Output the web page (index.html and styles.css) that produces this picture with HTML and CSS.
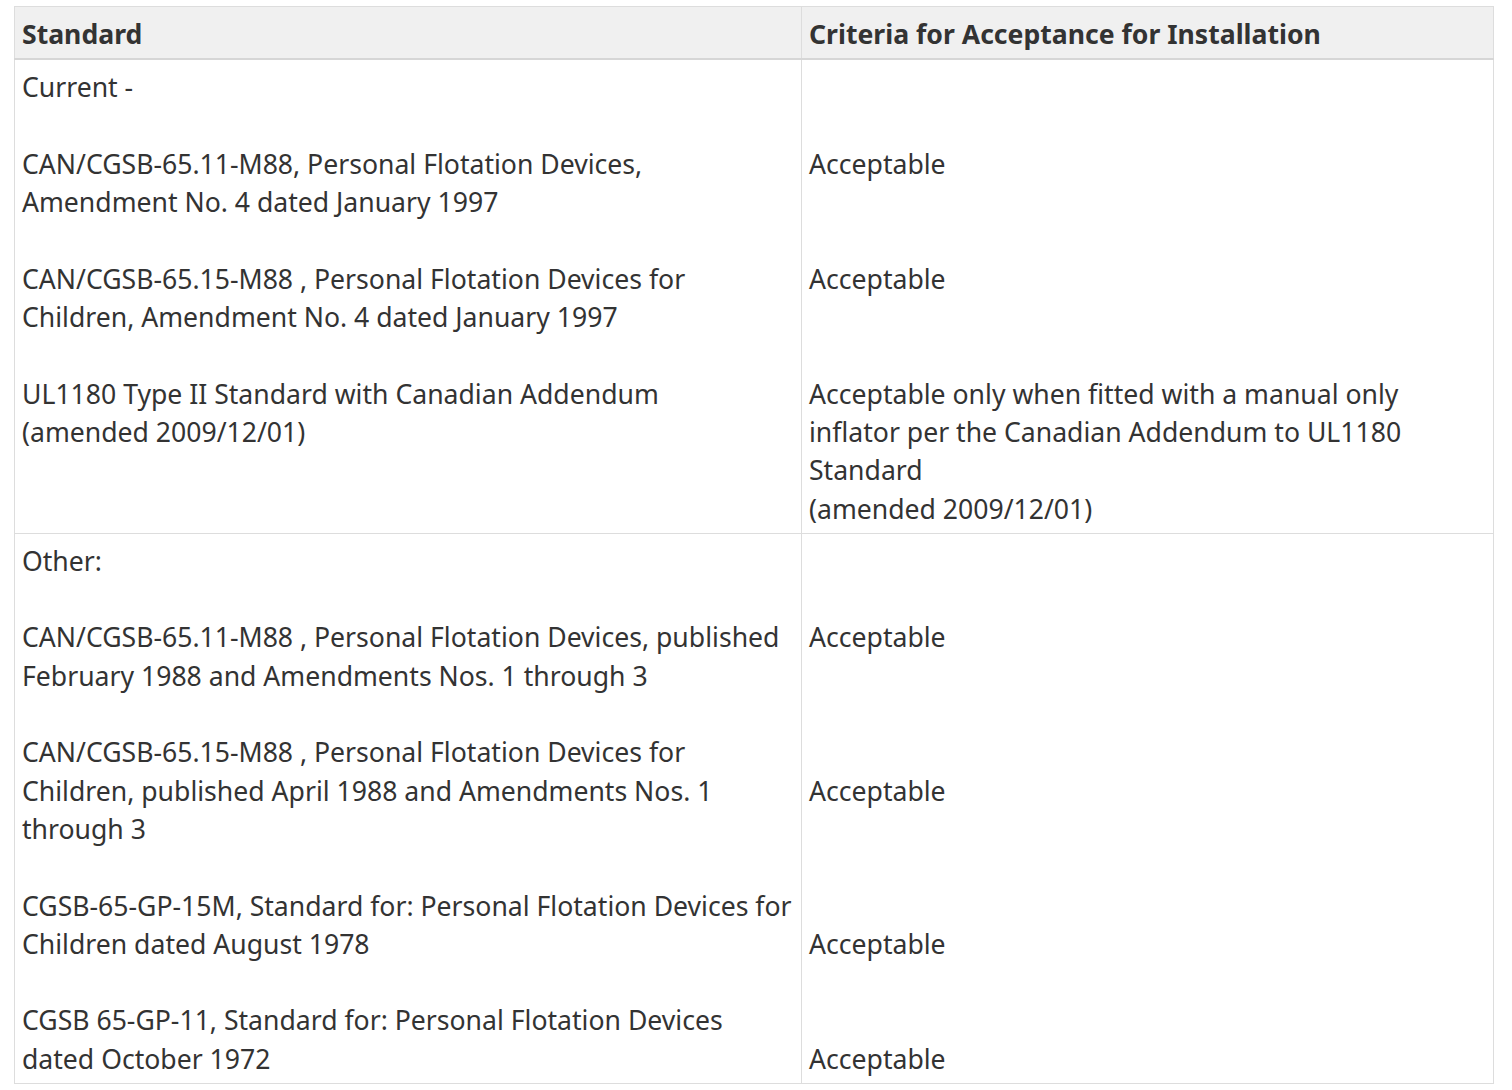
FILE: index.html
```html
<!DOCTYPE html>
<html lang="en">
<head>
<meta charset="utf-8">
<title>Standards</title>
<link rel="stylesheet" href="styles.css">
</head>
<body>
<table class="std-table">
  <thead>
    <tr>
      <th class="col-std">Standard</th>
      <th class="col-crit">Criteria for Acceptance for Installation</th>
    </tr>
  </thead>
  <tbody>
    <tr>
      <td>Current -<br><br>CAN/CGSB-65.11-M88, Personal Flotation Devices,<br>Amendment No. 4 dated January 1997<br><br>CAN/CGSB-65.15-M88 , Personal Flotation Devices for<br>Children, Amendment No. 4 dated January 1997<br><br>UL1180 Type II Standard with Canadian Addendum<br>(amended 2009/12/01)</td>
      <td><br><br>Acceptable<br><br><br>Acceptable<br><br><br>Acceptable only when fitted with a manual only<br>inflator per the Canadian Addendum to UL1180<br>Standard<br>(amended 2009/12/01)</td>
    </tr>
    <tr>
      <td>Other:<br><br>CAN/CGSB-65.11-M88 , Personal Flotation Devices, published<br>February 1988 and Amendments Nos. 1 through 3<br><br>CAN/CGSB-65.15-M88 , Personal Flotation Devices for<br>Children, published April 1988 and Amendments Nos. 1<br>through 3<br><br>CGSB-65-GP-15M, Standard for: Personal Flotation Devices for<br>Children dated August 1978<br><br>CGSB 65-GP-11, Standard for: Personal Flotation Devices<br>dated October 1972</td>
      <td><br><br>Acceptable<br><br><br><br>Acceptable<br><br><br><br>Acceptable<br><br><br>Acceptable</td>
    </tr>
  </tbody>
</table>
</body>
</html>
```

FILE: styles.css
```css
html, body {
  margin: 0;
  padding: 0;
  background: #ffffff;
}

body {
  padding: 6px 18px 0 14px;
  font-family: "Noto Sans", "Open Sans", sans-serif;
  color: #333333;
}

.std-table {
  width: 1480px;
  border-collapse: collapse;
  font-size: 26.6px;
  line-height: 38.3px;
}

.std-table th,
.std-table td {
  border: 1px solid #dddddd;
  text-align: left;
  vertical-align: top;
  white-space: nowrap;
}

.std-table th {
  background: #f0f0f0;
  font-weight: 700;
  padding: 8px 7px 5px 7px;
  border-bottom: 2px solid #d6d6d6;
}

.std-table td {
  padding: 8px 7px 5px 7px;
}

.col-std {
  width: 772px;
}
```
